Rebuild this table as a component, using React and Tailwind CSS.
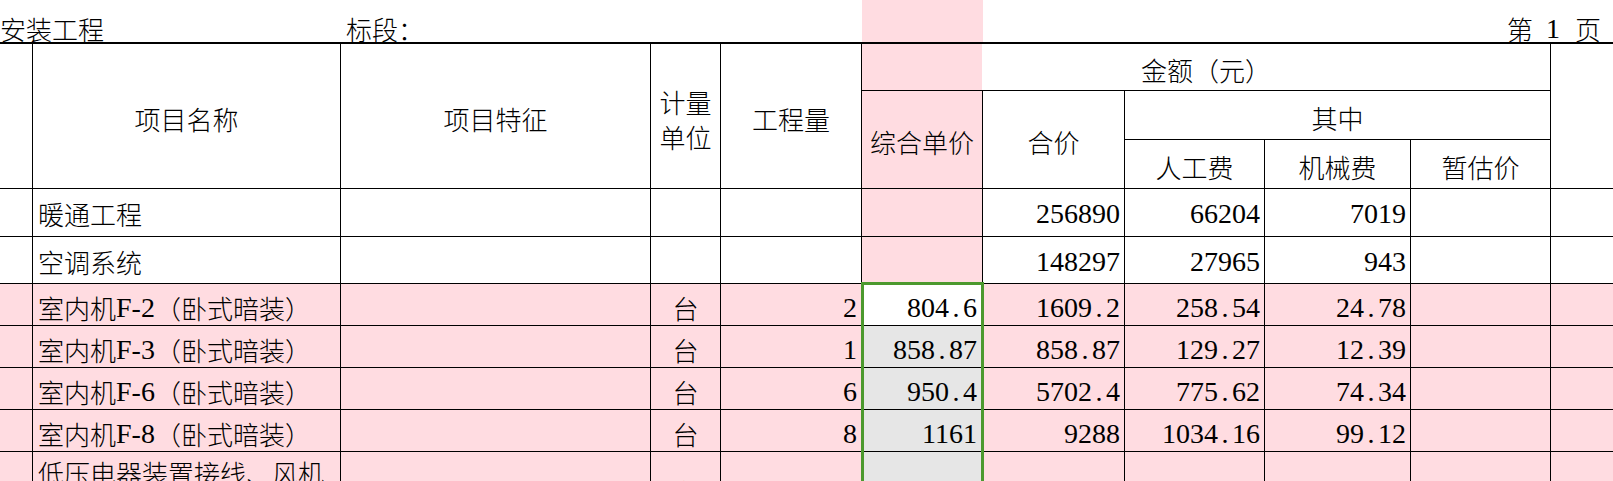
import React from 'react';

const cols = 'grid grid-cols-[33px_308px_310px_70px_141px_121px_142px_140px_146px_140px_62px]';
const latin = "font-['Liberation_Serif',serif] text-[28px]";

// ascii runs in the serif face, the rest in CJK
function Mixed({ t }) {
  return t.split(/([\x20-\x7e]+)/).filter(Boolean).map((s, i) =>
    /^[\x20-\x7e]+$/.test(s) ? <span key={i} className={latin}>{s}</span> : <span key={i}>{s}</span>
  );
}

function Num({ v }) {
  if (!v) return null;
  const [a, b] = v.split('.');
  return (
    <span className={latin}>
      {a}
      {b !== undefined && <span className="inline-block w-[14px] text-center">.</span>}
      {b}
    </span>
  );
}

const rows = [
  { name: '暖通工程', total: '256890', labor: '66204', mach: '7019', h: 'h-[48px]', pt: 'pt-[3px]' },
  { name: '空调系统', total: '148297', labor: '27965', mach: '943', h: 'h-[47px]', pt: 'pt-[3px]' },
  { name: '室内机F-2（卧式暗装）', unit: '台', qty: '2', price: '804.6', total: '1609.2', labor: '258.54', mach: '24.78', pink: true, active: true },
  { name: '室内机F-3（卧式暗装）', unit: '台', qty: '1', price: '858.87', total: '858.87', labor: '129.27', mach: '12.39', pink: true },
  { name: '室内机F-6（卧式暗装）', unit: '台', qty: '6', price: '950.4', total: '5702.4', labor: '775.62', mach: '74.34', pink: true },
  { name: '室内机F-8（卧式暗装）', unit: '台', qty: '8', price: '1161', total: '9288', labor: '1034.16', mach: '99.12', pink: true },
  { name: '低压电器装置接线、风机盘管接线', unit: '台', pink: true, tall: true },
];

const cell = 'border-r border-b border-black flex items-center';

export default function App() {
  return (
    <div className="relative w-[1613px] h-[481px] overflow-hidden bg-white text-black font-['Noto_Sans_CJK_SC',sans-serif] font-light text-[26px] leading-[26px]">
      {/* title line */}
      <div className={`${cols} h-[42px]`}>
        <div className="col-span-2 flex items-end whitespace-nowrap">安装工程</div>
        <div className="col-span-3 flex items-end pl-[5px]">标段：</div>
        <div className="bg-[#ffdce1]" />
        <div className="col-span-3" />
        <div className="col-span-2 flex items-end justify-end pr-[12px] whitespace-nowrap">
          第<span className="inline-block w-[13px]" /><span className={latin}>1</span><span className="inline-block w-[15px]" />页
        </div>
      </div>

      {/* header */}
      <div className={`${cols} grid-rows-[47px_49px_49px] border-t-2 border-black`}>
        <div className={`${cell} row-span-3`} />
        <div className={`${cell} row-span-3 justify-center pt-[5px]`}>项目名称</div>
        <div className={`${cell} row-span-3 justify-center pt-[5px]`}>项目特征</div>
        <div className={`${cell} row-span-3 justify-center pt-[5px] text-center leading-[35px]`}>计量<br />单位</div>
        <div className={`${cell} row-span-3 justify-center pt-[5px]`}>工程量</div>
        <div className={`${cell} col-span-5 justify-center pt-[5px] bg-[linear-gradient(to_right,#ffdce1_120px,#fff_120px)]`}>金额（元）</div>
        <div className="row-span-3 border-b border-black" />
        <div className={`${cell} row-span-2 justify-center pt-[5px] bg-[#ffdce1]`}>综合单价</div>
        <div className={`${cell} row-span-2 justify-center pt-[5px]`}>合价</div>
        <div className={`${cell} col-span-3 justify-center pt-[5px]`}>其中</div>
        <div className={`${cell} justify-center pt-[5px]`}>人工费</div>
        <div className={`${cell} justify-center pt-[5px]`}>机械费</div>
        <div className={`${cell} justify-center pt-[5px]`}>暂估价</div>
      </div>

      {/* body */}
      {rows.map((r, i) => {
        const bg = r.pink ? 'bg-[#ffdce1]' : '';
        const pt = r.pt || (r.tall ? 'pt-0' : 'pt-[7px]');
        const h = r.h || (r.tall ? 'h-[80px]' : 'h-[42px]');
        const priceBg = r.active ? 'bg-white' : r.pink ? 'bg-[#e6e6e6]' : 'bg-[#ffdce1]';
        return (
          <div key={i} className={`${cols} ${h} ${bg}`}>
            <div className={cell} />
            {r.tall ? (
              <div className="border-r border-b border-black pl-[5px] pt-[6px] leading-[30px]">
                <Mixed t={r.name} />
              </div>
            ) : (
              <div className={`${cell} ${pt} pl-[5px] whitespace-nowrap`}>
                <Mixed t={r.name} />
              </div>
            )}
            <div className={cell} />
            <div className={`${cell} ${pt} justify-center`}>{r.unit}</div>
            <div className={`${cell} ${pt} justify-end pr-[4px]`}><Num v={r.qty} /></div>
            <div className={`${cell} ${pt} justify-end pr-[5px] ${priceBg}`}><Num v={r.price} /></div>
            <div className={`${cell} ${pt} justify-end pr-[4px]`}><Num v={r.total} /></div>
            <div className={`${cell} ${pt} justify-end pr-[4px]`}><Num v={r.labor} /></div>
            <div className={`${cell} ${pt} justify-end pr-[4px]`}><Num v={r.mach} /></div>
            <div className={cell} />
            <div className="border-b border-black" />
          </div>
        );
      })}

      {/* selection frame */}
      <div className="pointer-events-none absolute top-[282px] left-[861px] w-[123px] h-[260px] border-[3px] border-[#4c992e]" />
    </div>
  );
}
